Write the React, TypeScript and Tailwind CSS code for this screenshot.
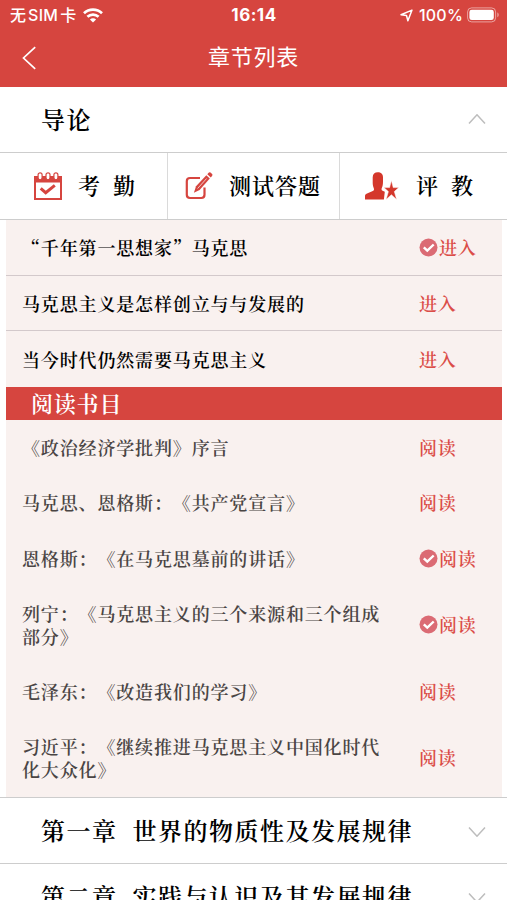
import React from "react";

const serif = "font-['Noto_Serif_CJK_SC','Noto_Sans_CJK_SC','Liberation_Serif',serif]";
const sans = "font-['Inter','Noto_Sans_CJK_SC',sans-serif]";

type Item = { title: string; done?: boolean; tall?: boolean };

const lessons: Item[] = [
  { title: "“千年第一思想家”马克思", done: true },
  { title: "马克思主义是怎样创立与与发展的" },
  { title: "当今时代仍然需要马克思主义" },
];

const readings: Item[] = [
  { title: "《政治经济学批判》序言" },
  { title: "马克思、恩格斯：《共产党宣言》" },
  { title: "恩格斯：《在马克思墓前的讲话》", done: true },
  { title: "列宁：《马克思主义的三个来源和三个组成部分》", done: true, tall: true },
  { title: "毛泽东：《改造我们的学习》" },
  { title: "习近平：《继续推进马克思主义中国化时代化大众化》", tall: true },
];

function Wifi() {
  return (
    <svg width="20" height="15" viewBox="0 0 20 15" fill="none" stroke="#fff" strokeWidth="2.7">
      <path d="M1 5.3C6 .5 14 .5 19 5.3" />
      <path d="M4.4 8.8c3.2-3 8-3 11.2 0" />
      <path d="M10 14.6 6.9 11.4c1.7-1.5 4.5-1.5 6.2 0z" fill="#fff" stroke="none" />
    </svg>
  );
}

function Location() {
  return (
    <svg width="13" height="13" viewBox="0 0 13 13" fill="none" stroke="#fff" strokeWidth="1.5" strokeLinejoin="round">
      <path d="M12 1.1 1 5.8l5.500.7 1.400 5.300z" />
    </svg>
  );
}

function Battery() {
  return (
    <svg width="33" height="16" viewBox="0 0 33 16" fill="none">
      <rect x=".6" y=".9" width="28" height="14" rx="4" stroke="#fff" strokeOpacity=".5" />
      <rect x="2.4" y="2.7" width="24.4" height="10.4" rx="2.4" fill="#fff" />
      <path d="M30.4 5.6c1.7.7 1.7 4 0 4.7z" fill="#fff" fillOpacity=".55" />
    </svg>
  );
}

function Chevron({ up }: { up?: boolean }) {
  return (
    <svg width="18" height="12" viewBox="0 0 18 12" fill="none" stroke="#bdbdbd" strokeWidth="1.5">
      <path d={up ? "M1 9.500 9 .8l8 8.700" : "M1 2.500l8 8.700 8-8.700"} />
    </svg>
  );
}

function CalendarIcon() {
  return (
    <svg width="28" height="28" viewBox="0 0 28 28" fill="none">
      <path fillRule="evenodd" fill="#d6453f" d="M0 4h28v24H0zM2 10.5v15.4h24V10.5z" />
      <g fill="#fff" stroke="#d6453f" strokeWidth="1.2">
        <rect x="4.1" y=".8" width="4" height="7" rx="2" />
        <rect x="12" y=".8" width="4" height="7" rx="2" />
        <rect x="19.9" y=".8" width="4" height="7" rx="2" />
      </g>
      <path d="M6.7 16.3l5 4.4 9.1-7.3" stroke="#d6453f" strokeWidth="3" />
    </svg>
  );
}

function EditIcon() {
  return (
    <svg width="28" height="28" viewBox="0 0 28 28" fill="none">
      <path d="M15 6H5Q1.800 6 1.800 9.200v13.600Q1.800 26 5 26h11.300q3.200 0 3.200-3.200V15.500" stroke="#d6453f" strokeWidth="2.200" />
      <path fill="#d6453f" d="M8.900 20.800l2.100-6.600L21.300 3.300l3.500 3.300-10.200 11.400z" />
      <path fill="#d6453f" d="M22.300 2.200l1.300-1.400c.6-.7 1.400-.7 2.100-.1l1.200 1.100c.7.600.7 1.500.1 2.200l-1.200 1.400z" />
      <path d="M12.600 16.500 21.600 6.500" stroke="#fff" strokeWidth=".7" />
    </svg>
  );
}

function TeacherIcon() {
  return (
    <svg width="34" height="28" viewBox="0 0 34 28" fill="#d4372b">
      <path d="M0 27.500v-3.200c0-1.500.7-2.300 2-2.800l5.800-2.500c1.400-.7 1.500-1.700.9-3C7.900 14.300 7.600 12 7.700 9.500V5.200C7.800 2 9.700.3 12.800.3S18 2 18 5.200v4.300c0 2.500-.3 4.600-1.100 6.300-.6 1.300-.5 2.300.7 2.900l2.200 1-.9 7.800z" />
      <path stroke="#fff" strokeWidth=".5" d="M26.400 8.500l1.800 7.100h5.600l-4.500 4 2.300 7.900-5.200-4.800-5.300 4.800 2.300-7.900-4.500-4h5.700z" />
    </svg>
  );
}

function DoneIcon() {
  return (
    <svg className="shrink-0" width="19" height="19" viewBox="0 0 19 19" fill="none">
      <circle cx="9.500" cy="9.500" r="9" fill="#db6b74" />
      <path d="M4.800 9.300l3.500 3.400 6.400-6.200" stroke="#fff" strokeWidth="2.400" />
    </svg>
  );
}

function Action({ label, done }: { label: string; done?: boolean }) {
  return (
    <div className="flex w-[83px] shrink-0 items-center gap-px font-semibold text-[#db4d48]">
      {done && <DoneIcon />}
      <span className="whitespace-nowrap">{label}</span>
    </div>
  );
}

function Chapter({ no, title, up }: { no: string; title?: string; up?: boolean }) {
  return (
    <div className="flex h-[66px] shrink-0 items-center border-b border-[#cdcdcd] pl-[41px] pr-[21px] text-[24px] font-semibold tracking-[1.500px] text-black">
      <span className="pb-[2px]">{no}</span>
      {title && <span className="ml-[15px] pb-[2px]">{title}</span>}
      <span className="ml-auto"><Chevron up={up} /></span>
    </div>
  );
}

export default function App() {
  return (
    <div lang="zh-CN" className={`flex h-[900px] w-[507px] flex-col overflow-hidden bg-white [text-spacing-trim:space-all] ${serif}`}>
      <header className={`h-[87px] shrink-0 bg-[#d6453f] text-white ${sans}`}>
        <div className="grid h-[30px] grid-cols-3 items-center pl-[10px] pr-[7px] text-[16px] font-medium leading-none">
          <div className="flex items-center gap-[7px]">
            <span className="whitespace-nowrap">无<span className="mx-[2px] tracking-[0.3px]">SIM</span>卡</span>
            <Wifi />
          </div>
          <span className="pr-[2px] text-center text-[17px] font-bold tracking-[0.500px]">16:14</span>
          <div className="flex items-center justify-end">
            <Location />
            <span className="ml-[6px] mr-[4px] tracking-[0.2px]">100%</span>
            <Battery />
          </div>
        </div>
        <div className="grid h-[55px] grid-cols-[60px_1fr_60px] items-center">
          <svg className="ml-[22px]" width="15" height="24" viewBox="0 0 15 24" fill="none" stroke="#fff" strokeWidth="1.700">
            <path d="M13.200 1.200 1.500 12l11.700 10.800" />
          </svg>
          <h1 className="text-center text-[22px] tracking-[0.8px]">章节列表</h1>
        </div>
      </header>

      <Chapter no="导论" up />

      <div className="grid h-[67px] shrink-0 grid-cols-[168px_172px_1fr] border-b border-[#cdcdcd] text-[22px] font-semibold text-black">
        <div className="flex items-center border-r border-[#dadada] pl-[34px]">
          <CalendarIcon />
          <span className="ml-4 flex gap-[13px] pb-1"><span>考</span><span>勤</span></span>
        </div>
        <div className="flex items-center border-r border-[#dadada] pl-[17px]">
          <EditIcon />
          <span className="ml-4 pb-1 tracking-[1px]">测试答题</span>
        </div>
        <div className="flex items-center pl-[25px]">
          <TeacherIcon />
          <span className="ml-[17px] flex gap-[13px] pb-1"><span>评</span><span>教</span></span>
        </div>
      </div>

      <div className="ml-[6px] mr-[5px] flex h-[577px] shrink-0 flex-col bg-[#f9f1ef] text-[18px] leading-[22.500px] tracking-[0.850px]">
        {lessons.map((item, i) => (
          <div key={item.title} className={`flex h-[55.667px] items-center pl-4 text-black ${i < 2 ? "border-b border-[#d3c9cb]" : ""}`}>
            <span className="flex-1 font-semibold">{item.title}</span>
            <Action label="进入" done={item.done} />
          </div>
        ))}
        <div className="flex h-[33px] items-center bg-[#d6453f] pb-px pl-[25px] text-[22px] font-semibold tracking-[0.800px] text-white">阅读书目</div>
        {readings.map((item) => (
          <div key={item.title} className={`flex items-center pb-px pl-4 text-[#4a4544] ${item.tall ? "h-[77.500px]" : "h-[55.500px]"}`}>
            <div className="flex-1 font-semibold"><p className="w-[364px]">{item.title}</p></div>
            <Action label="阅读" done={item.done} />
          </div>
        ))}
      </div>

      <div className="flex shrink-0 flex-col border-t border-[#cdcdcd]">
        <Chapter no="第一章" title="世界的物质性及发展规律" />
        <Chapter no="第二章" title="实践与认识及其发展规律" />
      </div>
    </div>
  );
}
